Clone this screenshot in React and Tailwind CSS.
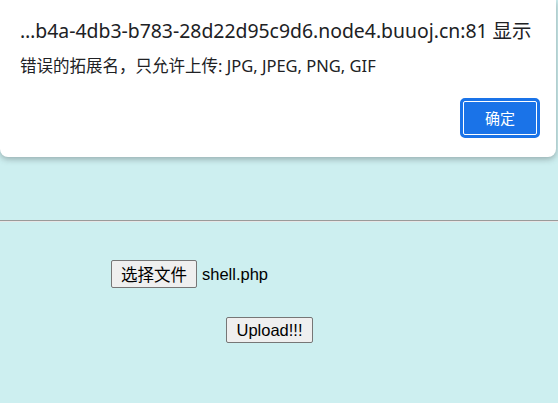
export default function App() {
  return (
    <main className="relative h-[403px] w-full overflow-hidden bg-[#cdeff0]" style={{ fontFamily: '"Liberation Sans", Arial, sans-serif' }}>
      {/* page content */}
      <div className="pt-[220px]">
        <div className="h-[2px] w-full border-t border-[#9a9a9a] border-b border-b-[#e6e6e6]" />
        <div className="mt-[38px] ml-[111px] flex items-center text-[16.5px] text-black">
          <button className="h-[28px] rounded-[2px] border border-[#767676] bg-[#efefef] px-[9px] text-[16.5px] leading-none" style={{ fontFamily: '"Noto Sans CJK SC", sans-serif' }}>
            选择文件
          </button>
          <span className="ml-[5px]">shell.php</span>
        </div>
        <div className="mt-[29px] ml-[226px]">
          <button className="h-[26px] w-[87px] rounded-[2px] border border-[#767676] bg-[#efefef] text-[16.5px] leading-none text-black">
            Upload!!!
          </button>
        </div>
      </div>

      {/* alert dialog */}
      <div
        className="absolute left-0 top-0 h-[157px] w-[556px] rounded-b-[8px] bg-white px-[20px] pt-[17px] text-[#202124]"
        style={{ fontFamily: '"Noto Sans", "Noto Sans CJK SC", sans-serif', boxShadow: "0 2px 6px rgba(60,64,67,0.4)" }}
      >
        <div className="whitespace-nowrap text-[19.4px] leading-[28px]">…b4a-4db3-b783-28d22d95c9d6.node4.buuoj.cn:81 显示</div>
        <div className="mt-[9px] whitespace-nowrap text-[16.5px] leading-[24px]">错误的拓展名，只允许上传: JPG, JPEG, PNG, GIF</div>
        <div className="mt-[20px] flex justify-end">
          <button className="-mr-[4px] flex h-[40px] w-[80px] items-center justify-center rounded-[5px] border-2 border-[#1a73e8] bg-[#1a73e8] text-[15px] text-white outline outline-1 -outline-offset-[4px] outline-white">
            确定
          </button>
        </div>
      </div>
    </main>
  );
}
